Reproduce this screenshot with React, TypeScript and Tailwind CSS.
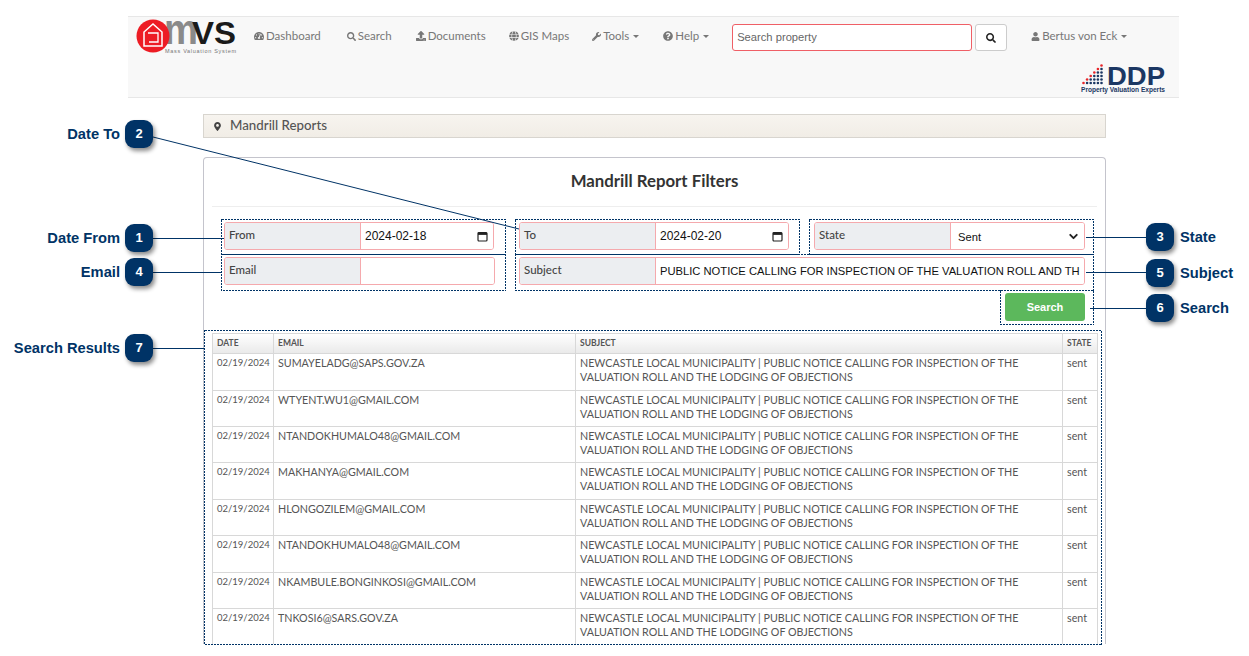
import { ChevronDown } from "lucide-react";
import { FaTachometerAlt, FaSearch, FaUpload, FaGlobe, FaWrench, FaQuestionCircle, FaUser, FaMapMarkerAlt } from "react-icons/fa";

const rows = [
  "SUMAYELADG@SAPS.GOV.ZA",
  "WTYENT.WU1@GMAIL.COM",
  "NTANDOKHUMALO48@GMAIL.COM",
  "MAKHANYA@GMAIL.COM",
  "HLONGOZILEM@GMAIL.COM",
  "NTANDOKHUMALO48@GMAIL.COM",
  "NKAMBULE.BONGINKOSI@GMAIL.COM",
  "TNKOSI6@SARS.GOV.ZA",
];

const subject =
  "NEWCASTLE LOCAL MUNICIPALITY | PUBLIC NOTICE CALLING FOR INSPECTION OF THE VALUATION ROLL AND THE LODGING OF OBJECTIONS";

function Caret() {
  return <span className="ml-[2px] inline-block border-x-[3px] border-t-[3px] border-x-transparent border-t-[#777] align-middle" />;
}

function NavLink({ icon, label, caret, className }: { icon: React.ReactNode; label: string; caret?: boolean; className?: string }) {
  return (
    <a className={`flex items-center gap-[2px] whitespace-nowrap text-[11.5px] text-[#777] ${className ?? ""}`}>
      {icon}
      <span>{label}</span>
      {caret && <Caret />}
    </a>
  );
}

function MvsLogo() {
  return (
    <svg width="100" height="36" viewBox="0 0 100 36" className="shrink-0 overflow-visible">
      <text x="28" y="25" fontFamily="'Liberation Sans', sans-serif" fontSize="42" fontWeight="700" fill="#8a8a8a" textLength="34" lengthAdjust="spacingAndGlyphs">m</text>
      <circle cx="17" cy="17" r="16.5" fill="#ed1c24" />
      <path d="M8 27V13L17 5l9 8v14z" fill="none" stroke="#fff" strokeWidth="1.5" />
      <path d="M12 14h10v9H13" fill="none" stroke="#fff" strokeWidth="1.3" />
      <text x="56" y="25" fontFamily="'Liberation Sans', sans-serif" fontSize="32" fontWeight="700" fill="#1a1a1a" textLength="44" lengthAdjust="spacingAndGlyphs">VS</text>
      <text x="29" y="33.5" fontFamily="'Liberation Sans', sans-serif" fontSize="5.5" fill="#777" textLength="71">Mass Valuation System</text>
    </svg>
  );
}

function DdpLogo() {
  const dots: React.ReactNode[] = [];
  const heights = [1, 2, 3, 4, 5, 6];
  heights.forEach((h, c) => {
    for (let r = 0; r < h; r++) {
      dots.push(<circle key={`${c}-${r}`} cx={2.5 + c * 3.6} cy={20 - r * 3.5} r="1.3" fill={r === h - 1 ? "#e8262a" : "#1b3763"} />);
    }
  });
  return (
    <svg width="84" height="30" viewBox="0 0 84 30" className="overflow-visible">
      {dots}
      <text x="26" y="22" fontFamily="'Liberation Sans', sans-serif" fontSize="26" fontWeight="700" fill="#1b3763" textLength="58" lengthAdjust="spacingAndGlyphs">DDP</text>
      <text x="0" y="28.5" fontFamily="'Liberation Sans', sans-serif" fontSize="6.4" fontWeight="700" fill="#1b3763" textLength="84" lengthAdjust="spacingAndGlyphs">Property Valuation Experts</text>
    </svg>
  );
}

function Navbar() {
  return (
    <nav className="ml-[128px] mt-4 flex h-[82px] w-[1051px] border-y border-[#e7e7e7] bg-[#f8f8f8] font-['Lato',sans-serif]">
      <div className="ml-2 mt-[2px]">
        <MvsLogo />
      </div>
      <div className="ml-[18px] mt-[11px] flex h-4 gap-6">
        <NavLink className="mr-[2px]" icon={<FaTachometerAlt size={10} />} label="Dashboard" />
        <NavLink icon={<FaSearch size={9} />} label="Search" />
        <NavLink className="mr-[-1px]" icon={<FaUpload size={10} />} label="Documents" />
        <NavLink className="mr-[-1px]" icon={<FaGlobe size={10} />} label="GIS Maps" />
        <NavLink icon={<FaWrench size={9} />} label="Tools" caret />
        <NavLink icon={<FaQuestionCircle size={10} />} label="Help" caret />
      </div>
      <div className="ml-[23px] mt-[7px] flex h-[27px] items-start">
        <input
          readOnly
          placeholder="Search property"
          className="h-[27px] w-[240px] rounded-[3px] border border-[#ef5f66] bg-white px-[4px] pb-[2px] font-['Liberation_Sans',sans-serif] text-[11.2px] placeholder:text-[#666]"
        />
        <button className="ml-[3px] flex h-[27px] w-[32px] items-center justify-center rounded-[3px] border border-[#ccc] bg-white">
          <FaSearch size={10} className="text-[#222]" />
        </button>
      </div>
      <div className="ml-6 flex flex-col">
        <NavLink className="mt-[11px] h-4" icon={<FaUser size={9} />} label="Bertus von Eck" caret />
        <div className="ml-[50px] mt-[19px]">
          <DdpLogo />
        </div>
      </div>
    </nav>
  );
}

function Field({ label, width, children }: { label: string; width: string; children: React.ReactNode }) {
  return (
    <div className={`flex h-[28px] overflow-hidden rounded-[3px] border border-[#f5a9ad] ${width}`}>
      <div className="flex w-[136px] shrink-0 border-r border-[#f5a9ad] bg-[#eceef1] pl-[4px] pt-[3px] text-[11.5px] font-medium text-[#444]">{label}</div>
      <div className="flex min-w-0 flex-1 items-center overflow-hidden whitespace-nowrap bg-white px-[4px] font-['Liberation_Sans',sans-serif] text-[12px] text-[#111]">{children}</div>
    </div>
  );
}

function DateValue({ value }: { value: string }) {
  return (
    <div className="flex w-full items-center justify-between">
      <span>{value}</span>
      <svg width="11" height="11" viewBox="0 0 11 11" className="mr-[1px]">
        <rect x="1" y="1.5" width="9" height="8.5" rx="1" fill="none" stroke="#222" strokeWidth="1.2" />
        <rect x="1" y="1.5" width="9" height="2.4" fill="#222" />
      </svg>
    </div>
  );
}

function ReportTable() {
  return (
    <table className="w-[885px] table-fixed border-collapse text-[10.7px] text-[#555]">
      <colgroup>
        <col className="w-[61px]" />
        <col className="w-[302px]" />
        <col className="w-[487px]" />
        <col className="w-[35px]" />
      </colgroup>
      <thead>
        <tr className="h-[20px] bg-gradient-to-b from-white to-[#e9e9e9] text-left text-[8.5px] font-bold text-[#555]">
          <th className="border border-[#d8d8d8] px-1">DATE</th>
          <th className="border border-[#d8d8d8] px-1">EMAIL</th>
          <th className="border border-[#d8d8d8] px-1">SUBJECT</th>
          <th className="border border-[#d8d8d8] px-1">STATE</th>
        </tr>
      </thead>
      <tbody>
        {rows.map((email, i) => (
          <tr key={i} className="h-[36.4px] align-top leading-[14px]">
            <td className="border border-[#d8d8d8] px-1 pt-[2px] text-[9.5px]">02/19/2024</td>
            <td className="border border-[#d8d8d8] px-1 pt-[2px]">{email}</td>
            <td className="border border-[#d8d8d8] px-1 pt-[2px] pr-10">{subject}</td>
            <td className="border border-[#d8d8d8] px-1 pt-[2px]">sent</td>
          </tr>
        ))}
      </tbody>
    </table>
  );
}

function Panel() {
  return (
    <section className="ml-[203px] mt-[19px] h-[487px] w-[903px] overflow-hidden rounded-t-[4px] border border-b-0 border-[#c4c4cc] px-2">
      <h2 className="flex h-[49px] items-center justify-center border-b border-[#eee] pb-[3px] text-[16.8px] font-bold text-[#333]">Mandrill Report Filters</h2>
      <div className="mt-[15px] flex flex-col gap-[7px] pl-[12px]">
        <div className="flex gap-[25px]">
          <Field label="From" width="w-[270px]"><DateValue value="2024-02-18" /></Field>
          <Field label="To" width="w-[270px]"><DateValue value="2024-02-20" /></Field>
          <Field label="State" width="w-[271px]">
            <div className="flex w-full items-center justify-between pl-[3px] pt-[2px] text-[11.2px]">
              <span>Sent</span>
              <ChevronDown size={13} strokeWidth={3.5} className="text-[#222]" />
            </div>
          </Field>
        </div>
        <div className="flex gap-[24px]">
          <Field label="Email" width="w-[271px]"><span /></Field>
          <Field label="Subject" width="w-[566px]">
            <span className="text-[11.2px]">PUBLIC NOTICE CALLING FOR INSPECTION OF THE VALUATION ROLL AND TH</span>
          </Field>
        </div>
        <div className="ml-[781px] mt-[1px]">
          <button className="h-[28px] w-[80px] rounded-[3px] bg-[#5cb85c] font-['Liberation_Sans',sans-serif] text-[11px] font-bold text-white">Search</button>
        </div>
      </div>
      <div className="mt-[12px]">
        <ReportTable />
      </div>
    </section>
  );
}

function Badge({ n, label, left, top, side }: { n: number; label: string; left: number; top: number; side: "l" | "r" }) {
  return (
    <div style={{ left, top }} className="absolute flex items-center font-['Liberation_Sans',sans-serif] text-[14.7px] font-bold text-[#003366]">
      {side === "l" && <span className="absolute right-[33px] whitespace-nowrap">{label}</span>}
      <span className="flex h-[28px] w-[28px] items-center justify-center rounded-[9px] bg-[#003366] text-[13px] text-white shadow-[2px_3px_4px_rgba(0,0,0,0.45)]">{n}</span>
      {side === "r" && <span className="absolute left-[34px] whitespace-nowrap">{label}</span>}
    </div>
  );
}

const dotBoxes = [
  [221.5, 219.5, 284, 71],
  [515.5, 219.5, 284, 35],
  [809.5, 219.5, 284, 35],
  [515.5, 254.5, 578, 36],
  [1000.5, 290.5, 93, 34],
  [204.5, 330.5, 897, 314],
];

function Callouts() {
  return (
    <>
      <svg width="1249" height="656" className="pointer-events-none absolute left-0 top-0">
        <g stroke="#003366" strokeWidth="1" fill="none" shapeRendering="crispEdges">
          {dotBoxes.map(([x, y, w, h]) => (
            <rect key={`${x}-${y}`} x={x} y={y} width={w} height={h} strokeDasharray="2 1" />
          ))}
          <path d="M153 238.5 H224" />
          <path d="M153 272.5 H222" />
          <path d="M221 254.5 H505" />
          <path d="M515 254.5 H799" />
          <path d="M809 254.5 H1093" />
          <path d="M1086 237.5 H1146" />
          <path d="M1086 272.5 H1146" />
          <path d="M1090 308.5 H1146" />
          <path d="M153 348.5 H204" />
        </g>
        <path d="M153 137 L519 229" stroke="#003366" strokeWidth="1" fill="none" />
      </svg>
      <Badge n={2} label="Date To" left={125} top={120} side="l" />
      <Badge n={1} label="Date From" left={125} top={224} side="l" />
      <Badge n={4} label="Email" left={125} top={258} side="l" />
      <Badge n={7} label="Search Results" left={125} top={334} side="l" />
      <Badge n={3} label="State" left={1146} top={223} side="r" />
      <Badge n={5} label="Subject" left={1146} top={259} side="r" />
      <Badge n={6} label="Search" left={1146} top={294} side="r" />
    </>
  );
}

export default function App() {
  return (
    <div className="relative h-[656px] w-[1249px] overflow-hidden bg-white font-['Lato',sans-serif]">
      <Navbar />
      <div className="ml-[203px] mt-4 flex h-[24px] w-[903px] items-center gap-[8px] border border-[#d8d5cf] bg-gradient-to-b from-[#f7f4ef] to-[#f1ede6] pl-[9px] text-[13.3px] font-medium text-[#555]">
        <FaMapMarkerAlt size={9} className="text-[#444]" />
        <span>Mandrill Reports</span>
      </div>
      <Panel />
      <Callouts />
    </div>
  );
}
